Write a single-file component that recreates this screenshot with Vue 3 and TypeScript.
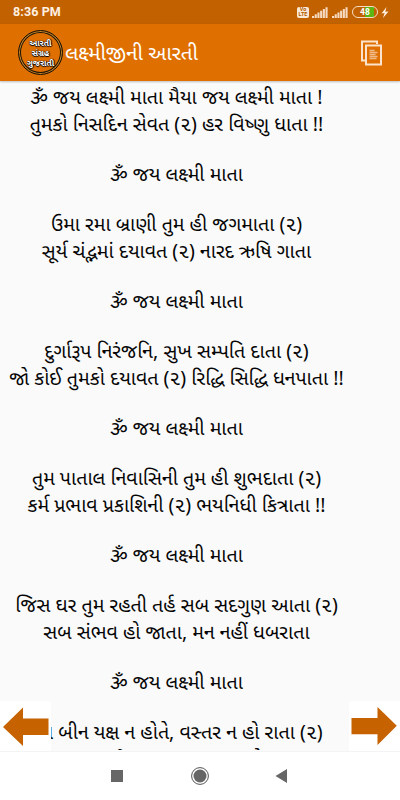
<script setup lang="ts">
interface Verse {
  lines: string[]
}

const refrain = 'ૐ જય લક્ષ્મી માતા'

const verses: Verse[] = [
  { lines: ['ૐ જય લક્ષ્મી માતા મૈયા જય લક્ષ્મી માતા !', 'તુમકો નિસદિન સેવત (૨) હર વિષ્ણુ ધાતા !!'] },
  { lines: ['ઉમા રમા બ્રાણી તુમ હી જગમાતા (૨)', 'સૂર્ય ચંદ્ભમાં દયાવત (૨) નારદ ઋષિ ગાતા'] },
  { lines: ['દુર્ગારૂપ નિરંજનિ, સુખ સમ્પતિ દાતા (૨)', 'જો કોઈ તુમકો દયાવત (૨) રિદ્ધિ સિદ્ધિ ધનપાતા !!'] },
  { lines: ['તુમ પાતાલ નિવાસિની તુમ હી શુભદાતા (૨)', 'કર્મ પ્રભાવ પ્રકાશિની (૨) ભયનિધી કિત્રાતા !!'] },
  { lines: ['જિસ ઘર તુમ રહતી તર્હ સબ સદગુણ આતા (૨)', 'સબ સંભવ હો જાતા, મન નહીં ધબરાતા'] },
  { lines: ['તુમ બીન યક્ષ ન હોતે, વસ્તર ન હો રાતા (૨)', 'ખાન પાન વૈભવ સબ કુછ તુમ સે આતા'] },
]

const logoLines = ['આરતી', 'સંગ્રહ', 'ગુજરાતી']
const signalBars = [0, 1, 2, 3, 4, 5]
</script>

<template>
  <div class="screen">
    <div class="status">
      <span class="clock">8:36 PM</span>
      <div class="indicators">
        <div class="volte"><span>Vo</span><span>LTE</span></div>
        <svg v-for="n in 2" :key="n" class="signal" width="16" height="11" viewBox="0 0 16 11">
          <rect v-for="b in signalBars" :key="b" :x="b * 2.7" :y="9 - b * 1.75" width="2.1" :height="2 + b * 1.75" />
        </svg>
        <div class="battery"><span>48</span></div>
        <svg class="bolt" width="8" height="11" viewBox="0 0 8 11"><path d="M5.5 0 0.5 6.4 3.6 6.1 2 11 7.5 4.5 4.3 4.7Z" /></svg>
      </div>
    </div>

    <header class="bar">
      <div class="logo">
        <span v-for="l in logoLines" :key="l">{{ l }}</span>
      </div>
      <h1>લક્ષ્મીજીની આરતી</h1>
      <svg class="copy" width="22" height="26" viewBox="0 0 22 26">
        <path d="M17 4V1.5H2V20.5H5" fill="none" stroke="#fbe3cc" stroke-width="2" />
        <rect x="6" y="5.5" width="15" height="19" fill="none" stroke="#fbe3cc" stroke-width="2" />
        <path d="M9.5 10.5h5M9.5 12.5h8M9.5 14.5h6M9.5 16.5h8M9.5 18.5h7" stroke="#efb98a" stroke-width="1.3" />
      </svg>
    </header>

    <main class="content">
      <div class="lyrics">
        <section v-for="(v, i) in verses" :key="i" class="verse">
          <p v-for="line in v.lines" :key="line">{{ line }}</p>
          <p v-if="i < verses.length - 1" class="refrain">{{ refrain }}</p>
        </section>
      </div>
      <button class="page prev" aria-label="Previous">
        <svg width="51" height="50" viewBox="0 0 51 50"><path d="M3 26 23 6.5V17.5H48.5V34H23V45Z" /></svg>
      </button>
      <button class="page next" aria-label="Next">
        <svg width="51" height="50" viewBox="0 0 51 50"><path d="M47.8 24.7 28.5 6V17H2.5V33.3H28.5V44Z" /></svg>
      </button>
    </main>

    <nav class="navigation">
      <svg width="400" height="49" viewBox="0 0 400 49">
        <rect x="111" y="18" width="12" height="12" fill="#666" />
        <circle cx="200" cy="24" r="8.4" fill="none" stroke="#555" stroke-width="1" />
        <circle cx="200" cy="24" r="6.5" fill="#666" />
        <path d="M275.5 24 287 17V31Z" fill="#666" />
      </svg>
    </nav>
  </div>
</template>

<style>
body {
  margin: 0;
}
</style>

<style scoped>
.screen {
  display: flex;
  flex-direction: column;
  width: 400px;
  height: 800px;
  overflow: hidden;
  background: #fafafa;
  font-family: "Noto Sans", "Noto Sans Gujarati", Roboto, sans-serif;
}
.status {
  display: flex;
  justify-content: space-between;
  align-items: center;
  flex: none;
  height: 24px;
  padding: 0 11px 0 13px;
  background: #c26100;
  color: #fff0e2;
}
.clock {
  font: 700 12.5px/24px Roboto, sans-serif;
  letter-spacing: 0.1px;
}
.indicators {
  display: flex;
  align-items: center;
  height: 24px;
}
.volte {
  display: flex;
  flex-direction: column;
  align-items: center;
  justify-content: center;
  width: 12px;
  height: 11px;
  margin-right: 3px;
  border-radius: 2px;
  background: #fbe9d8;
  color: #b35a00;
  font: 700 5.5px/5px Roboto, sans-serif;
}
.signal {
  margin-right: 4px;
  fill: #f6dac2;
}
.battery {
  box-sizing: border-box;
  width: 26px;
  height: 12px;
  margin-right: 3px;
  border: 1px solid #f6dcc5;
  border-radius: 6px;
  background: linear-gradient(90deg, transparent 50%, #5cb512 50% 88%, transparent 88%);
  color: #fff;
  font: 700 8.5px/10px Roboto, sans-serif;
  text-align: center;
}
.bolt {
  fill: #fff0e2;
}
.bar {
  display: flex;
  align-items: center;
  flex: none;
  box-sizing: border-box;
  height: 57px;
  padding: 0 18px;
  background: #df7000;
  box-shadow: 0 1px 2px rgba(0, 0, 0, 0.25);
  z-index: 1;
}
.logo {
  display: flex;
  flex-direction: column;
  align-items: center;
  justify-content: center;
  box-sizing: border-box;
  width: 45px;
  height: 45px;
  border: 1.5px solid #1b1204;
  border-radius: 50%;
  box-shadow: inset 0 0 0 1px #c98a2e, inset 0 0 0 2px #1b1204;
  color: #fff;
  font-size: 8.3px;
  font-weight: 700;
  line-height: 10px;
  text-shadow: 0 0 1px #000, 1px 0 1px #000, 0 1px 1px #000;
}
h1 {
  flex: 1;
  margin: 0 0 2px 2px;
  color: #fff;
  font-size: 20.5px;
  font-weight: 400;
  line-height: 40px;
  white-space: nowrap;
}
.content {
  position: relative;
  flex: none;
  height: 670px;
  overflow: hidden;
}
.lyrics {
  box-sizing: border-box;
  width: 353px;
  height: 669px;
  padding-top: 2px;
  overflow: hidden;
}
.verse {
  height: 127px;
}
p {
  margin: 0;
  color: #050505;
  font-size: 19.6px;
  line-height: 27px;
  text-align: center;
  white-space: nowrap;
}
.refrain {
  padding-top: 23px;
}
.page {
  position: absolute;
  bottom: 0;
  width: 51px;
  height: 50px;
  padding: 0;
  border: 0;
  background: #fff;
  fill: #c66200;
}
.page svg {
  display: block;
}
.prev {
  left: 0;
}
.next {
  right: 0;
}
.navigation {
  flex: none;
  height: 49px;
  border-top: 1px solid #f4f4f4;
  background: #fff;
}
</style>
